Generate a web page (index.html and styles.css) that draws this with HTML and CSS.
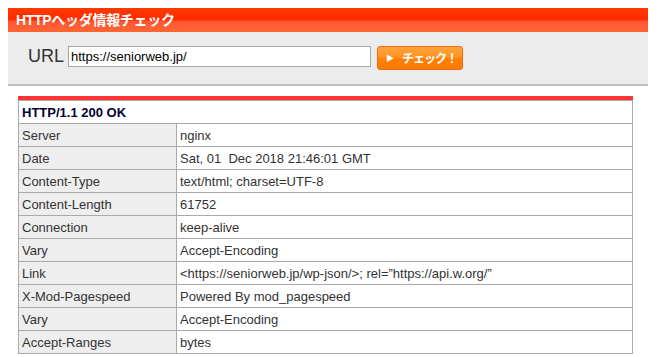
FILE: index.html
```html
<!DOCTYPE html>
<html lang="ja">

<head>
    <meta charset="UTF-8">
    <title>HTTPヘッダ情報チェック</title>
    <link rel="stylesheet" href="styles.css">
</head>

<body>
    <div class="tool">
        <h1 class="tool-title">HTTPヘッダ情報チェック</h1>
        <form class="url-form" onsubmit="return false">
            <label class="url-label" for="url">URL</label>
            <input class="url-input" id="url" type="text" value="https://seniorweb.jp/">
            <button class="check-btn" type="submit"><span class="check-arrow">&#9654;</span><span class="check-text">チェック！</span></button>
        </form>
    </div>

    <div class="result">
        <table class="header-table">
            <tr>
                <th colspan="2" class="status">HTTP/1.1 200 OK</th>
            </tr>
            <tr><td class="key">Server</td><td>nginx</td></tr>
            <tr><td class="key">Date</td><td>Sat, 01&nbsp; Dec 2018 21:46:01 GMT</td></tr>
            <tr><td class="key">Content-Type</td><td>text/html; charset=UTF-8</td></tr>
            <tr><td class="key">Content-Length</td><td>61752</td></tr>
            <tr><td class="key">Connection</td><td>keep-alive</td></tr>
            <tr><td class="key">Vary</td><td>Accept-Encoding</td></tr>
            <tr><td class="key">Link</td><td>&lt;https://seniorweb.jp/wp-json/&gt;; rel=”https://api.w.org/”</td></tr>
            <tr><td class="key">X-Mod-Pagespeed</td><td>Powered By mod_pagespeed</td></tr>
            <tr><td class="key">Vary</td><td>Accept-Encoding</td></tr>
            <tr><td class="key">Accept-Ranges</td><td>bytes</td></tr>
        </table>
    </div>
</body>

</html>
```

FILE: styles.css
```css
body {
    margin: 8px;
    background: #fff;
    font-family: "Liberation Sans", Arial, "Noto Sans CJK JP", sans-serif;
    color: #333;
}

.tool {
    width: 640px;
    background: #ececec;
    border-bottom: 2px solid #c0c0c0;
}

.tool-title {
    margin: 0;
    height: 24px;
    padding-left: 8px;
    line-height: 25px;
    font-size: 14px;
    font-weight: bold;
    letter-spacing: -0.3px;
    color: #fff;
    font-family: "Liberation Sans", "Noto Sans CJK JP", sans-serif;
    background: linear-gradient(#ff3a00 0, #ff2a00 50%, #ff5533 55%, #ff6633 100%);
}

.url-form {
    display: flex;
    align-items: center;
    height: 52px;
    margin: 0;
    padding-left: 20px;
}

.url-label {
    font-size: 18px;
    color: #333;
    margin-right: 4px;
    margin-top: -4px;
}

.url-input {
    width: 297px;
    height: 17px;
    padding: 1px 2px;
    border: 1px solid #a8a8a8;
    font-family: "Liberation Sans", Arial, sans-serif;
    font-size: 13px;
    color: #000;
    margin-top: -4px;
}

.check-btn {
    display: flex;
    align-items: center;
    margin-left: 6px;
    margin-top: -1px;
    width: 86px;
    height: 24px;
    border: 1px solid #f06a10;
    border-radius: 3px;
    background: linear-gradient(#ffa43c 0, #ff9422 45%, #ff7f00 55%, #ff7a00 100%);
    color: #fff;
    font-family: "Noto Sans CJK JP", sans-serif;
    font-weight: bold;
    font-size: 12px;
    padding: 0;
    white-space: nowrap;
}

.check-arrow {
    font-size: 8px;
    margin: 0 8px 0 8px;
}

.check-text {
    letter-spacing: -1px;
}

.result {
    margin: 10px 0 0 10px;
    width: 615px;
    border-top: 4px solid #ff3333;
}

.header-table {
    width: 615px;
    border-collapse: collapse;
    font-size: 13px;
}

.header-table th,
.header-table td {
    height: 22px;
    padding: 0 0 0 3px;
    border: 1px solid #aaa;
    text-align: left;
    font-weight: normal;
    white-space: nowrap;
}

.header-table .status {
    color: #000033;
    font-weight: bold;
    background: #fff;
}

.header-table .key {
    width: 154px;
    background: #eee;
}
```
